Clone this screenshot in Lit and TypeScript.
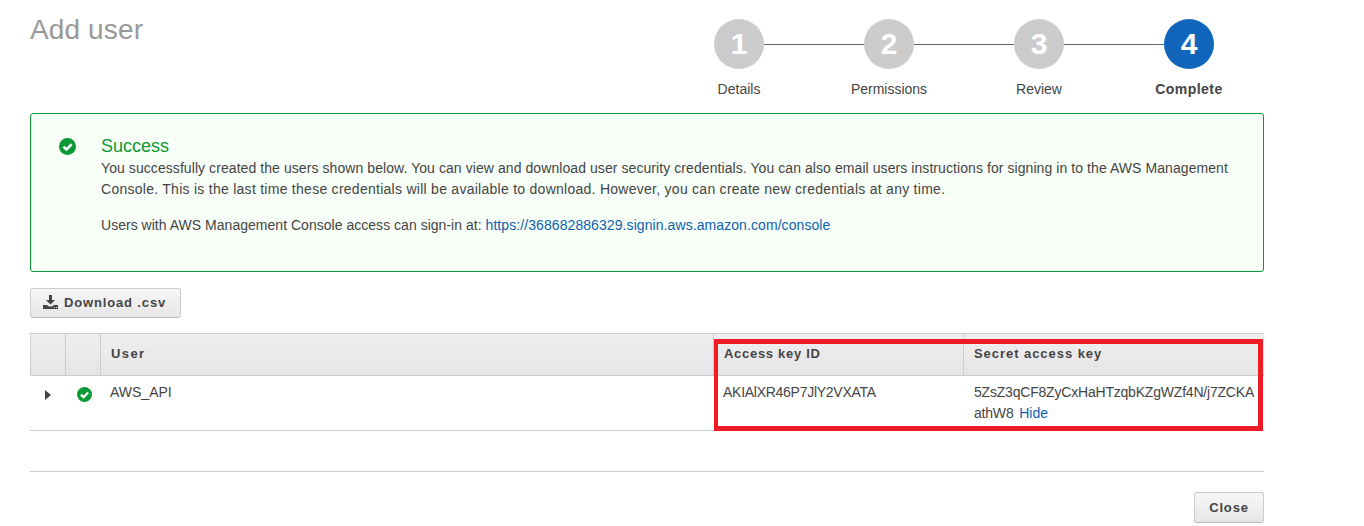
import { LitElement, html, css, svg } from "lit";
import { customElement } from "lit/decorators.js";

const steps = [
  { n: 1, label: "Details" },
  { n: 2, label: "Permissions" },
  { n: 3, label: "Review" },
  { n: 4, label: "Complete", active: true },
];

const okIcon = (size: number) => html`<svg width=${size} height=${size} viewBox="0 0 16 16">
  <circle cx="8" cy="8" r="8" fill="#0a9a35"></circle>
  ${svg`<path d="M4.2 8.1 7 10.8 11.9 5.9" fill="none" stroke="#fff" stroke-width="2.4"></path>`}
</svg>`;

@customElement("app-root")
export class AppRoot extends LitElement {
  static styles = css`
    :host {
      display: block;
      position: relative;
      width: 1234px;
      height: 526px;
      overflow: hidden;
      padding-left: 30px;
      font-family: "Liberation Sans", Arial, sans-serif;
      font-size: 14px;
      color: #444;
    }

    .head {
      display: flex;
      justify-content: space-between;
      height: 113px;
    }
    h1 {
      margin: 0;
      padding-top: 14px;
      font-size: 28px;
      line-height: 32px;
      font-weight: 400;
      letter-spacing: 0.13px;
      color: #999;
    }

    .wizard {
      width: 600px;
      padding-top: 19px;
    }
    .track {
      display: flex;
      align-items: center;
      padding: 0 50px;
    }
    .dot {
      flex: none;
      width: 50px;
      height: 50px;
      border-radius: 50%;
      background: #ccc;
      color: #fff;
      font-size: 30px;
      font-weight: 700;
      line-height: 50px;
      text-align: center;
    }
    .dot.active {
      background: #1166bb;
    }
    .link {
      flex: 1;
      height: 1px;
      background: #666;
    }
    .labels {
      display: grid;
      grid-template-columns: repeat(4, 150px);
      margin-top: 12px;
      text-align: center;
      line-height: 16px;
    }
    .labels .active {
      font-weight: 700;
      letter-spacing: 0.45px;
    }

    .alert {
      box-sizing: border-box;
      display: flex;
      height: 159px;
      padding: 21px 0 0 28px;
      border: 1px solid #0a9a35;
      border-radius: 3px;
      background: #f8fff8;
    }
    .alert-icon {
      flex: none;
      width: 42px;
      padding-top: 3px;
    }
    .alert-title {
      font-size: 18px;
      line-height: 23px;
      color: #0a9a35;
    }
    .alert p {
      margin: 0;
      line-height: 21px;
      white-space: nowrap;
    }
    .alert p + p {
      margin-top: 15px;
    }
    .alert span {
      display: block;
    }
    .alert .l1 {
      letter-spacing: 0.073px;
    }
    .alert .l2 {
      letter-spacing: 0.267px;
    }
    .alert .l3 {
      letter-spacing: 0.025px;
    }
    a {
      color: #0f5fb0;
      text-decoration: none;
    }
    .alert a {
      letter-spacing: 0.08px;
    }

    button {
      box-sizing: border-box;
      display: flex;
      align-items: center;
      justify-content: center;
      gap: 6px;
      height: 30px;
      padding: 0;
      border: 1px solid #ccc;
      border-bottom-color: #bbb;
      border-radius: 3px;
      background: linear-gradient(#f7f7f7, #e6e6e6);
      font: 700 13px "Liberation Sans", Arial, sans-serif;
      letter-spacing: 0.85px;
      color: #444;
    }
    .download {
      width: 151px;
      margin-top: 16px;
      justify-content: flex-start;
      padding: 0 0 2px 12px;
    }
    .close {
      width: 70px;
      height: 31px;
      margin: 20px 0 0 auto;
      padding-bottom: 1px;
    }

    .table {
      display: grid;
      grid-template-columns: 35px 35px 613px 250px 301px;
      margin-top: 15px;
      border-bottom: 1px solid #ccc;
    }
    .th {
      box-sizing: border-box;
      height: 43px;
      padding: 12px 10px 0;
      border-top: 1px solid #ccc;
      border-bottom: 1px solid #ccc;
      border-left: 1px solid #ccc;
      background: linear-gradient(#f0eff0, #e6e4e6);
      font-weight: 700;
      font-size: 13px;
      line-height: 16px;
      letter-spacing: 0.7px;
    }
    .th.user {
      letter-spacing: 1.4px;
    }
    .th.secret {
      letter-spacing: 0.95px;
    }
    .td {
      box-sizing: border-box;
      height: 54px;
      padding: 6px 0 0 10px;
      line-height: 21px;
    }
    .td.icon {
      padding: 11px 0 0;
      display: flex;
      justify-content: center;
      align-items: flex-start;
    }
    .td.icon.ok {
      padding-left: 3px;
    }
    .td.key {
      letter-spacing: -0.27px;
    }
    .td.secret {
      padding-left: 11px;
    }
    .td.secret span {
      display: block;
      letter-spacing: -0.2px;
    }
    .td.secret a {
      margin-left: 2px;
      letter-spacing: 0;
    }
    .caret {
      width: 0;
      height: 0;
      margin-top: 3px;
      border-left: 6px solid #444;
      border-top: 5px solid transparent;
      border-bottom: 5px solid transparent;
    }

    hr {
      height: 1px;
      margin: 40px 0 0;
      border: 0;
      background: #ccc;
    }

    .callout {
      position: absolute;
      left: 714px;
      top: 339px;
      width: 549px;
      height: 92px;
      box-sizing: border-box;
      border: 5px solid #ee1c25;
      border-left-width: 4px;
    }
  `;

  render() {
    return html`
      <div class="head">
        <h1>Add user</h1>
        <div class="wizard">
          <div class="track">
            ${steps.map(
              (s, i) => html`${i ? html`<span class="link"></span>` : ""}
                <span class="dot ${s.active ? "active" : ""}">${s.n}</span>`
            )}
          </div>
          <div class="labels">
            ${steps.map((s) => html`<span class=${s.active ? "active" : ""}>${s.label}</span>`)}
          </div>
        </div>
      </div>

      <div class="alert">
        <div class="alert-icon">${okIcon(17)}</div>
        <div>
          <div class="alert-title">Success</div>
          <p>
            <span class="l1">You successfully created the users shown below. You can view and download user security credentials. You can also email users instructions for signing in to the AWS Management</span>
            <span class="l2">Console. This is the last time these credentials will be available to download. However, you can create new credentials at any time.</span>
          </p>
          <p class="l3">
            Users with AWS Management Console access can sign-in at:
            <a href="#">https://368682886329.signin.aws.amazon.com/console</a>
          </p>
        </div>
      </div>

      <button class="download">
        <svg width="15" height="14" viewBox="0 0 15 14">
          <path d="M6 0h3v5h3L7.5 9.5 3 5h3z" fill="#444"></path>
          <path d="M0 10h4l2 1.5h3l2-1.5h4v4H0z" fill="#444"></path>
          <path d="M11 12h1v1h-1zM13 12h1v1h-1z" fill="#eee"></path>
        </svg>
        Download .csv
      </button>

      <div class="table">
        <div class="th"></div>
        <div class="th"></div>
        <div class="th user">User</div>
        <div class="th">Access key ID</div>
        <div class="th secret">Secret access key</div>

        <div class="td icon"><span class="caret"></span></div>
        <div class="td icon ok">${okIcon(15)}</div>
        <div class="td">AWS_API</div>
        <div class="td key">AKIAlXR46P7JlY2VXATA</div>
        <div class="td secret">
          <span>5ZsZ3qCF8ZyCxHaHTzqbKZgWZf4N/j7ZCKA</span>
          <span>athW8 <a href="#">Hide</a></span>
        </div>
      </div>

      <hr />
      <button class="close">Close</button>
      <div class="callout"></div>
    `;
  }
}
